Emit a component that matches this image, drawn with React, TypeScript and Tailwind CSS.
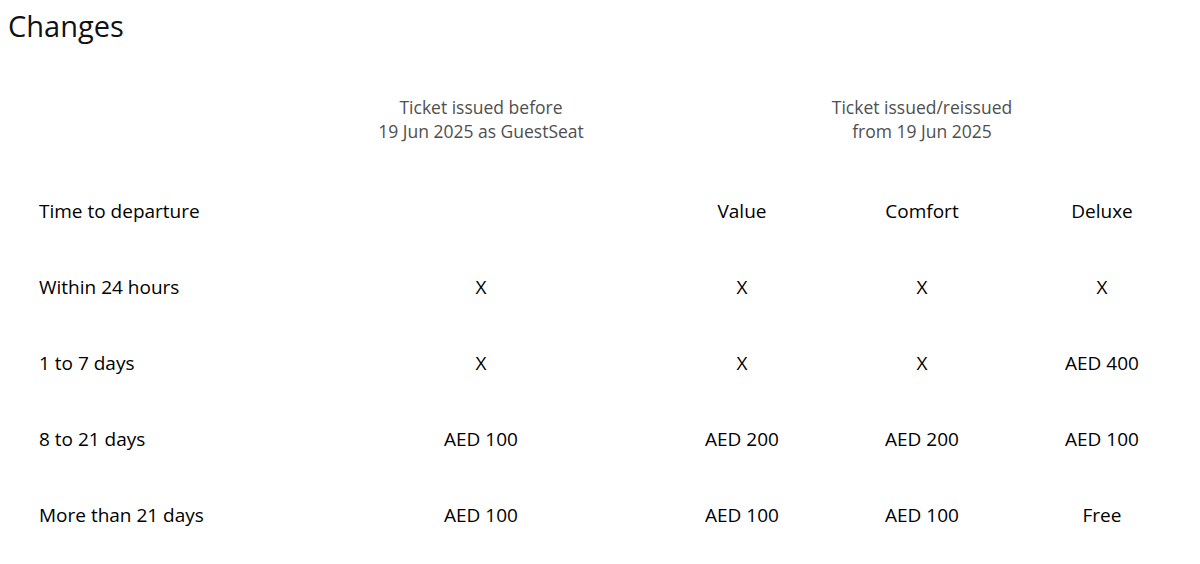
const columns = ['Value', 'Comfort', 'Deluxe']

const rows = [
  { label: 'Within 24 hours', guest: 'X', values: ['X', 'X', 'X'] },
  { label: '1 to 7 days', guest: 'X', values: ['X', 'X', 'AED 400'] },
  { label: '8 to 21 days', guest: 'AED 100', values: ['AED 200', 'AED 200', 'AED 100'] },
  { label: 'More than 21 days', guest: 'AED 100', values: ['AED 100', 'AED 100', 'Free'] },
]

const grid = 'grid grid-cols-[302px_342px_180px_180px_180px]'

export default function App() {
  return (
    <div className="min-h-[564px] bg-white px-2 text-black" style={{ fontFamily: '"Open Sans", Arial, sans-serif' }}>
      {/* Title */}
      <h1 className="pt-2 text-[29px] leading-9 font-normal text-[#111]">Changes</h1>

      {/* Ticket group headers */}
      <div className={clsx(grid, 'mt-[51px] mb-[30px] text-[17.5px] leading-6 font-medium text-[#4f4f4f]')}>
        <div />
        <div className="text-center">
          <p>Ticket issued before</p>
          <p>19 Jun 2025 as GuestSeat</p>
        </div>
        <div className="col-span-3 text-center">
          <p>Ticket issued/reissued</p>
          <p>from 19 Jun 2025</p>
        </div>
      </div>

      {/* Column headers */}
      <div className={clsx(grid, 'h-[76px] items-center text-[19px]')}>
        <div className="pl-[31px]">Time to departure</div>
        <div />
        {columns.map((c) => (
          <div key={c} className="text-center">{c}</div>
        ))}
      </div>

      {/* Rows */}
      {rows.map((r) => (
        <div key={r.label} className={clsx(grid, 'h-[76px] items-center text-[19px]')}>
          <div className="pl-[31px]">{r.label}</div>
          <div className="text-center">{r.guest}</div>
          {r.values.map((v, i) => (
            <div key={i} className="text-center">{v}</div>
          ))}
        </div>
      ))}
    </div>
  )
}

function clsx(...parts: string[]) {
  return parts.join(' ')
}
